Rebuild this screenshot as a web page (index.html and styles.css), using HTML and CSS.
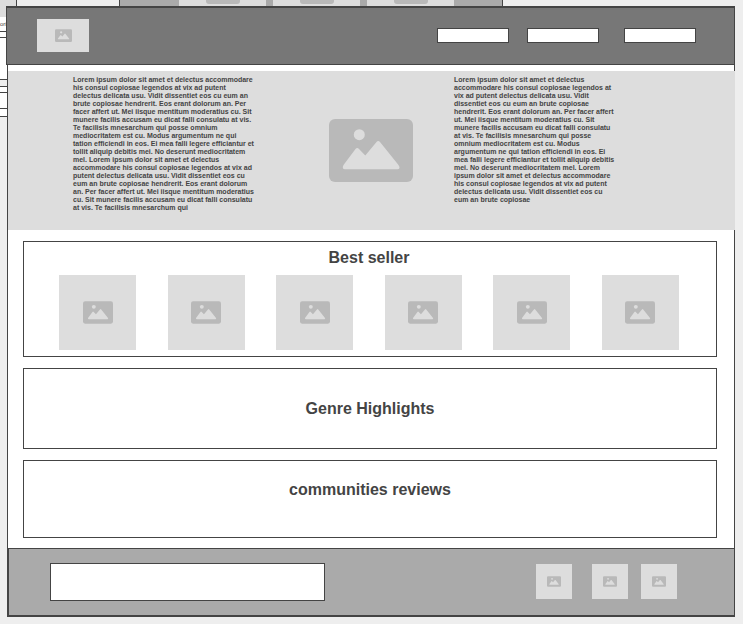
FILE: index.html
```html
<!DOCTYPE html>
<html lang="en">
<head>
<meta charset="utf-8">
<title>Book store wireframe</title>
<link rel="stylesheet" href="styles.css">
</head>
<body>
<svg class="defs" aria-hidden="true">
  <symbol id="photo" viewBox="0 0 84 63">
    <rect width="84" height="63" rx="6" fill="#b9b9b9"/>
    <circle cx="30.3" cy="15.7" r="5.5" fill="#ddd"/>
    <path d="M16 50.3Q12.500 50 14.500 46L26.500 30Q28.300 28 30 30L36.300 36.500L47.500 23Q49.300 21 51 23L69.500 46Q72 50 68.500 50.300Z" fill="#ddd"/>
  </symbol>
</svg>

<div class="board-top" aria-hidden="true">
  <div class="thumb"></div>
  <div class="thumb"></div>
  <div class="thumb"></div>
</div>
<div class="board-left" aria-hidden="true">
  <div class="left-hero"></div>
  <div class="left-label">ori</div>
  <div class="left-box left-gap"></div>
  <div class="left-box left-tall"></div>
  <div class="left-box left-gap left-shade"></div>
  <div class="left-box left-gap"></div>
  <div class="left-box left-mid"></div>
  <div class="left-box left-foot"></div>
</div>

<div class="page">
  <header class="header">
    <a class="tile logo" href="#" aria-label="Home"><svg><use href="#photo"/></svg></a>
    <nav class="nav">
      <a href="#" aria-label="Books"></a>
      <a href="#" aria-label="Genres"></a>
      <a href="#" aria-label="Account"></a>
    </nav>
  </header>

  <main>
    <section class="hero">
      <p class="copy copy-start">Lorem ipsum dolor sit amet et delectus accommodare<br>his consul copiosae legendos at vix ad putent<br>delectus delicata usu. Vidit dissentiet eos cu eum an<br>brute copiosae hendrerit. Eos erant dolorum an. Per<br>facer affert ut. Mei iisque mentitum moderatius cu. Sit<br>munere facilis accusam eu dicat falli consulatu at vis.<br>Te facilisis mnesarchum qui posse omnium<br>mediocritatem est cu. Modus argumentum ne qui<br>tation efficiendi in eos. Ei mea falli legere efficiantur et<br>tollit aliquip debitis mei. No deserunt mediocritatem<br>mel. Lorem ipsum dolor sit amet et delectus<br>accommodare his consul copiosae legendos at vix ad<br>putent delectus delicata usu. Vidit dissentiet eos cu<br>eum an brute copiosae hendrerit. Eos erant dolorum<br>an. Per facer affert ut. Mei iisque mentitum moderatius<br>cu. Sit munere facilis accusam eu dicat falli consulatu<br>at vis. Te facilisis mnesarchum qui</p>
      <svg class="hero-image" aria-hidden="true"><use href="#photo"/></svg>
      <p class="copy copy-end">Lorem ipsum dolor sit amet et delectus<br>accommodare his consul copiosae legendos at<br>vix ad putent delectus delicata usu. Vidit<br>dissentiet eos cu eum an brute copiosae<br>hendrerit. Eos erant dolorum an. Per facer affert<br>ut. Mei iisque mentitum moderatius cu. Sit<br>munere facilis accusam eu dicat falli consulatu<br>at vis. Te facilisis mnesarchum qui posse<br>omnium mediocritatem est cu. Modus<br>argumentum ne qui tation efficiendi in eos. Ei<br>mea falli legere efficiantur et tollit aliquip debitis<br>mei. No deserunt mediocritatem mel. Lorem<br>ipsum dolor sit amet et delectus accommodare<br>his consul copiosae legendos at vix ad putent<br>delectus delicata usu. Vidit dissentiet eos cu<br>eum an brute copiosae</p>
    </section>

    <div class="sections">
      <section class="panel best">
        <h2>Best seller</h2>
        <div class="books">
          <div class="tile"><svg><use href="#photo"/></svg></div>
          <div class="tile"><svg><use href="#photo"/></svg></div>
          <div class="tile"><svg><use href="#photo"/></svg></div>
          <div class="tile"><svg><use href="#photo"/></svg></div>
          <div class="tile"><svg><use href="#photo"/></svg></div>
          <div class="tile"><svg><use href="#photo"/></svg></div>
        </div>
      </section>
      <section class="panel genre"><h2>Genre Highlights</h2></section>
      <section class="panel reviews"><h2>communities reviews</h2></section>
    </div>
  </main>

  <footer class="footer">
    <input class="signup" type="text" aria-label="Email">
    <div class="social">
      <a class="tile" href="#" aria-label="Social one"><svg><use href="#photo"/></svg></a>
      <a class="tile" href="#" aria-label="Social two"><svg><use href="#photo"/></svg></a>
      <a class="tile" href="#" aria-label="Social three"><svg><use href="#photo"/></svg></a>
    </div>
  </footer>
</div>
</body>
</html>
```
FILE: styles.css
```css
* { box-sizing: border-box; }

body {
  margin: 0;
  padding: 6px 8px 7px 7px;
  background: #eee;
  color: #444;
  font-family: "Liberation Sans", Arial, sans-serif;
}

h2, p { margin: 0; }

.defs { position: absolute; width: 0; height: 0; }

/* Neighbouring boards that lie behind the page on the canvas */
.board-top {
  position: absolute;
  top: 0;
  left: 119px;
  width: 384px;
  height: 8px;
  padding-left: 59px;
  display: flex;
  gap: 7px;
  background: #aaa;
  border: solid #444;
  border-width: 0 1px;
}
.thumb { width: 87px; background: #ddd; }
.thumb::before {
  content: "";
  display: block;
  width: 34px;
  height: 4px;
  margin: 0 auto;
  background: #b9b9b9;
  border-radius: 0 0 3px 3px;
}

.board-left {
  position: absolute;
  top: 0;
  left: 0;
  width: 17px;
  background: #fff;
  border-right: 1px solid #444;
}
.left-hero { height: 17px; background: #ddd; }
.left-label { height: 14px; font-size: 6px; line-height: 14px; }
.left-box { border-top: 1px solid #444; }
.left-gap { height: 6px; }
.left-tall { height: 42px; }
.left-shade { height: 7px; background: #eee; }
.left-mid { height: 16px; }
.left-foot { height: 9px; border-bottom: 1px solid #444; }

/* Page */
.page {
  position: relative;
  background: #fff;
  border: solid #444;
  border-width: 0 1px 2px;
}

.tile {
  display: flex;
  align-items: center;
  justify-content: center;
  background: #ddd;
}

.header {
  display: flex;
  align-items: center;
  justify-content: space-between;
  height: 59px;
  margin: 0 -1px 6px -2px;
  padding: 0 38px 1px 30px;
  background: #777;
  border: 1px solid #444;
  border-top-width: 2px;
}
.logo { width: 52px; height: 33px; }
.logo svg { width: 17px; height: 13px; }

.nav { display: grid; grid-template-columns: 90px 97px 72px; }
.nav a {
  width: 72px;
  height: 15px;
  background: #fff;
  border: 1px solid #444;
}

.hero {
  display: grid;
  grid-template-columns: 65fr 180px 76fr 84px 41fr 160px 121fr;
  margin-right: -1px;
  background: #ddd;
}
.copy {
  padding: 5px 0 18px;
  font-size: 7px;
  line-height: 8px;
  font-weight: 700;
  white-space: nowrap;
}
.copy-start { grid-column: 2; }
.hero-image { grid-column: 4; align-self: center; width: 84px; height: 63px; }
.copy-end { grid-column: 6; }

.sections {
  display: grid;
  gap: 11px;
  padding: 11px 17px 10px 15px;
}
.panel { border: 1px solid #444; text-align: center; }
.panel h2 { font-size: 16px; line-height: 18px; }
.best { padding: 7px 37px 6px 35px; }
.books { display: flex; justify-content: space-between; margin-top: 8px; }
.books .tile { width: 77px; height: 75px; }
.books svg { width: 30px; height: 23px; }
.genre { padding: 31px 0 30px; }
.reviews { padding: 20px 0 38px; }

.footer {
  display: flex;
  align-items: center;
  justify-content: space-between;
  gap: 20px;
  height: 67px;
  padding: 0 57px 1px 41px;
  background: #aaa;
  border: solid #444;
  border-width: 1px 0 0 1px;
}
.signup {
  width: 275px;
  height: 38px;
  background: #fff;
  border: 1px solid #444;
  border-radius: 0;
}
.social { display: grid; grid-template-columns: 56px 49px 36px; }
.social .tile { width: 36px; height: 35px; }
.social svg { width: 14px; height: 11px; }
```
